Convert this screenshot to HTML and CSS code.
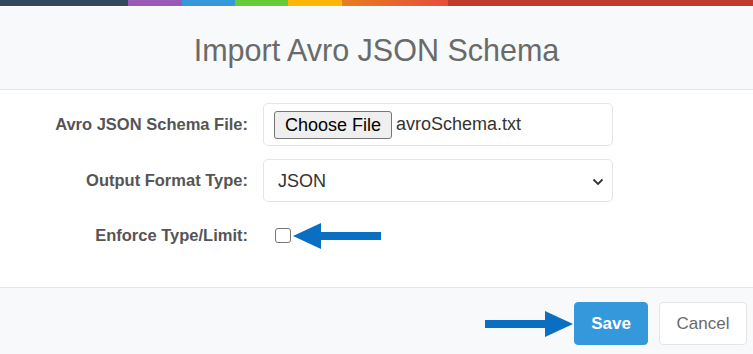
FILE: index.html
```html
<!DOCTYPE html>
<html lang="en">
  <head>
    <meta charset="UTF-8" />
    <meta name="viewport" content="width=device-width, initial-scale=1.0" />
    <title>Import Avro JSON Schema</title>
    <link rel="stylesheet" href="styles.css">
  </head>
  <body>
    <div class="stripe">
      <span class="s-dark"></span>
      <span class="s-purple"></span>
      <span class="s-blue"></span>
      <span class="s-green"></span>
      <span class="s-yellow"></span>
      <span class="s-orange"></span>
      <span class="s-red"></span>
    </div>

    <header class="modal-head">
      <h1>Import Avro JSON Schema</h1>
    </header>

    <form class="modal-body">
      <div class="row">
        <label>Avro JSON Schema File:</label>
        <div class="field file-field">
          <span class="file-btn">Choose File</span>
          <span class="file-name">avroSchema.txt</span>
        </div>
      </div>
      <div class="row">
        <label>Output Format Type:</label>
        <div class="field select-field">
          <select>
            <option>JSON</option>
          </select>
          <svg class="chevron" width="12" height="8" viewBox="0 0 12 8"><path d="M1.5 1.5 L6 6 L10.5 1.5" fill="none" stroke="#333" stroke-width="1.8" /></svg>
        </div>
      </div>
      <div class="row check-row">
        <label>Enforce Type/Limit:</label>
        <div class="check-wrap">
          <input type="checkbox" />
          <svg class="arrow arrow-left" width="88" height="28" viewBox="0 0 88 28"><path d="M0 14 L28 1 L28 10 L88 10 L88 18 L28 18 L28 27 Z" fill="#0a6fc2" /></svg>
        </div>
      </div>
    </form>

    <footer class="modal-foot">
      <div class="save-wrap">
        <svg class="arrow arrow-right" width="88" height="28" viewBox="0 0 88 28"><path d="M88 14 L60 1 L60 10 L0 10 L0 18 L60 18 L60 27 Z" fill="#0a6fc2" /></svg>
        <button type="button" class="btn btn-save">Save</button>
      </div>
      <button type="button" class="btn btn-cancel">Cancel</button>
    </footer>
  </body>
</html>
```

FILE: styles.css
```css
* {
  box-sizing: border-box;
}
body {
  margin: 0;
  width: 753px;
  height: 354px;
  overflow: hidden;
  font-family: "Liberation Sans", Arial, sans-serif;
  background-color: #fff;
  color: #555;
}
.stripe {
  display: flex;
  height: 6px;
}
.stripe span {
  display: block;
  height: 100%;
}
.s-dark {
  width: 128px;
  background-color: #34495e;
}
.s-purple {
  width: 54px;
  background-color: #9b59b6;
}
.s-blue {
  width: 53px;
  background-color: #3498db;
}
.s-green {
  width: 53px;
  background-color: #62cb35;
}
.s-yellow {
  width: 54px;
  background-color: #ffb606;
}
.s-orange {
  width: 106px;
  background: linear-gradient(to right, #e67e22, #e74c3c);
}
.s-red {
  flex: 1;
  background-color: #c0392b;
}

.modal-head {
  height: 84px;
  background-color: #f7f9fa;
  border-top: 1px solid #fff;
  border-bottom: 1px solid #e4e5e7;
  text-align: center;
}
.modal-head h1 {
  margin: 0;
  padding-top: 25px;
  font-size: 30.5px;
  font-weight: normal;
  line-height: 36px;
  color: #6a6a6a;
}

.modal-body {
  height: 197px;
  padding-top: 13px;
}
.row {
  display: flex;
  align-items: center;
  height: 43px;
  margin-bottom: 13px;
}
.row label {
  width: 249px;
  padding-right: 1px;
  text-align: right;
  font-size: 16.5px;
  font-weight: bold;
  color: #555;
}
.field {
  margin-left: 14px;
  width: 350px;
  height: 43px;
  border: 1px solid #e4e5e7;
  border-radius: 5px;
  display: flex;
  align-items: center;
  font-size: 18px;
  color: #333;
}
.file-field {
  padding-left: 10px;
}
.file-btn {
  height: 28px;
  padding: 0 10px;
  line-height: 26px;
  border: 1px solid #767676;
  border-radius: 3px;
  background-color: #efefef;
  color: #000;
  margin-right: 4px;
}
.select-field {
  position: relative;
}
.select-field select {
  appearance: none;
  border: none;
  background: transparent;
  width: 100%;
  height: 100%;
  padding-left: 14px;
  font-family: inherit;
  font-size: 18px;
  color: #333;
}
.chevron {
  position: absolute;
  right: 8px;
  top: 18px;
  pointer-events: none;
}
.check-row {
  height: 40px;
}
.check-wrap {
  position: relative;
  margin-left: 26px;
  display: flex;
  align-items: center;
}
.check-wrap input {
  appearance: none;
  margin: 0;
  width: 16px;
  height: 15px;
  border: 1.5px solid #767676;
  border-radius: 3px;
  background-color: #fff;
}
.arrow {
  position: absolute;
}
.arrow-left {
  left: 18px;
  top: -6px;
}

.modal-foot {
  height: 67px;
  border-top: 1px solid #e4e5e7;
  background-color: #f7f9fa;
  display: flex;
  justify-content: flex-end;
  align-items: flex-start;
  padding: 14px 6px 0 0;
  gap: 11px;
}
.save-wrap {
  position: relative;
}
.arrow-right {
  right: 75px;
  top: 8px;
}
.btn {
  height: 43px;
  border-radius: 4px;
  font-family: inherit;
  font-size: 17px;
  cursor: pointer;
}
.btn-save {
  width: 74px;
  border: 1px solid #3498db;
  background-color: #3498db;
  color: #fff;
  font-weight: bold;
}
.btn-cancel {
  width: 88px;
  border: 1px solid #e4e5e7;
  background-color: #fff;
  color: #6a6a6a;
}
```
